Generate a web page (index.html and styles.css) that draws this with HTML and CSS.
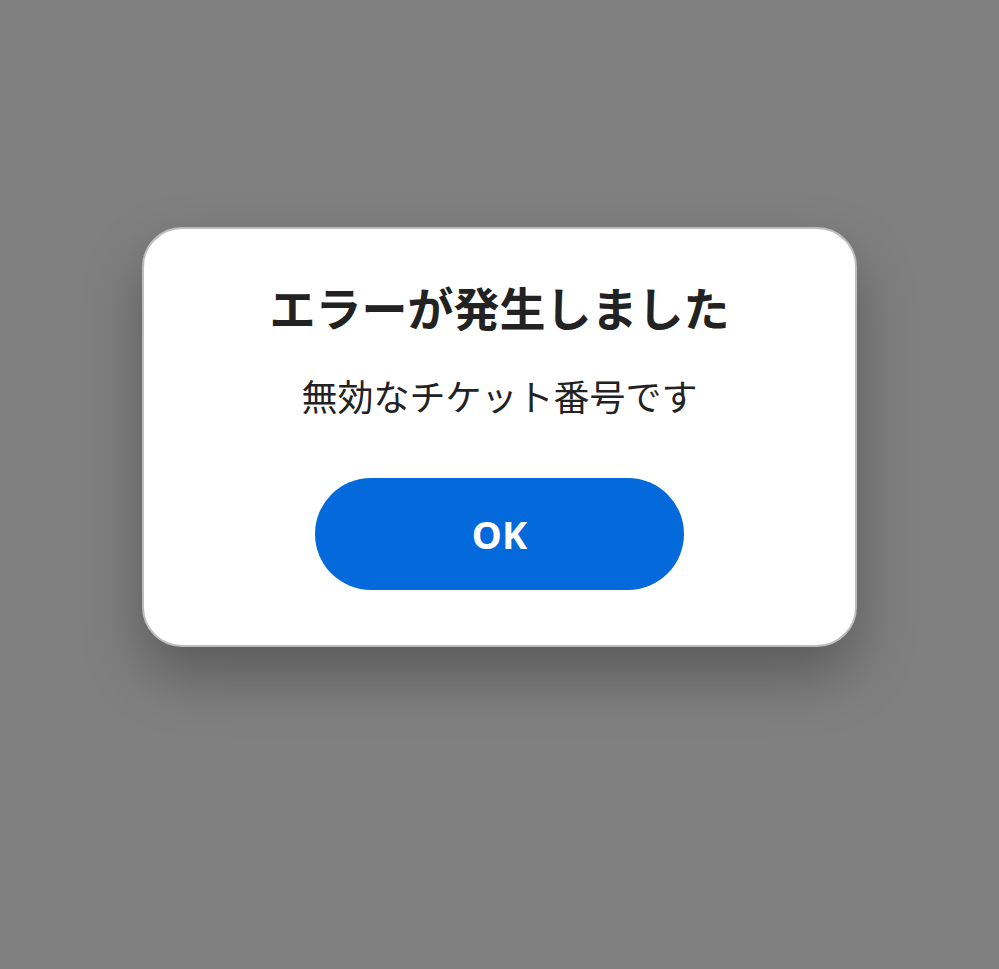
FILE: index.html
```html
<!DOCTYPE html>
<html>
<head>
	<title>エラー</title>
	<meta charset="utf-8">
	<link rel="stylesheet" href="styles.css">
</head>
<body>
	<div class="dialog">
		<h1 class="dialogtitle">エラーが発生しました</h1>
		<p class="dialogmsg">無効なチケット番号です</p>
		<div class="okbtn">OK</div>
	</div>
</body>
</html>
```

FILE: styles.css
```css
html, body {
	height: 100%;
}
body {
	margin: 0;
	background-color: #808080;
	font-family: "Noto Sans CJK JP", "Noto Sans", sans-serif;
	overflow: hidden;
}
.dialog {
	width: 711px;
	margin: 227px auto 0;
	padding: 50px 0 55px;
	background-color: white;
	border: 2px solid #bdbdbd;
	border-radius: 40px;
	box-shadow: 0 28px 60px rgba(0, 0, 0, 0.3);
	display: flex;
	flex-direction: column;
	align-items: center;
}
.dialogtitle {
	margin: 0;
	font-size: 46px;
	line-height: 55px;
	font-weight: 700;
	color: #222;
}
.dialogmsg {
	margin: 40px 0 0;
	font-size: 36px;
	line-height: 43px;
	color: #222;
}
.okbtn {
	margin-top: 61px;
	width: 369px;
	height: 112px;
	line-height: 112px;
	border-radius: 56px;
	background-color: #0469db;
	color: white;
	text-align: center;
	font-family: "Noto Sans", sans-serif;
	font-size: 38px;
	font-weight: 700;
}
```
